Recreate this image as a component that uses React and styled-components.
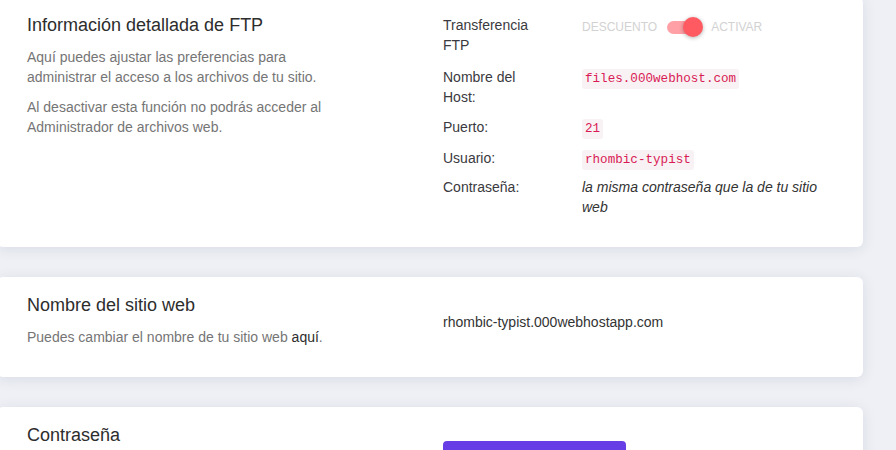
import React from "react";
import styled, { createGlobalStyle } from "styled-components";

const Global = createGlobalStyle`
  html, body { margin: 0; padding: 0; }
  body {
    background: #eef0f5;
    font-family: "Liberation Sans", Arial, sans-serif;
    color: #333;
    overflow: hidden;
  }
`;

const Page = styled.div`
  width: 896px;
  height: 450px;
  overflow: hidden;
`;

const Stack = styled.div`
  display: flex;
  flex-direction: column;
  gap: 30px;
  margin: -3px 0 0 -3px;
  width: 866px;
`;

const Card = styled.section`
  background: #fff;
  border-radius: 6px;
  box-shadow: 0 2px 14px rgba(40, 50, 90, 0.1);
  padding: 17px 30px 30px 30px;
  display: grid;
  grid-template-columns: 416px 1fr;
  min-height: ${(p) => p.$minHeight || 0}px;
`;

const Left = styled.div`
  display: flex;
  flex-direction: column;
`;

const Title = styled.h2`
  margin: 0 0 11px;
  font-size: 18px;
  line-height: 22px;
  font-weight: 400;
  color: #2d2d2d;
`;

const Desc = styled.p`
  margin: 0 0 10px;
  font-size: 14px;
  line-height: 20px;
  color: #757575;
  width: 320px;
  &:last-child { margin-bottom: 0; }
`;

const Link = styled.a`
  color: #2d2d2d;
  text-decoration: none;
`;

const Right = styled.div`
  padding-top: ${(p) => p.$offset || 1}px;
`;

const InfoList = styled.div`
  display: flex;
  flex-direction: column;
`;

const InfoRow = styled.div`
  display: grid;
  grid-template-columns: 139px 251px;
  font-size: 14px;
  line-height: 20px;
  margin-bottom: ${(p) => p.$gap ?? 10}px;
`;

const Label = styled.div`
  color: #3a3a40;
  width: 100px;
`;

const Value = styled.div`
  color: #333;
  font-style: ${(p) => (p.$italic ? "italic" : "normal")};
`;

const Code = styled.code`
  font-family: "Liberation Mono", "Courier New", monospace;
  font-size: 12.6px;
  line-height: 1;
  color: #d81b55;
  background: #f9f2f4;
  border-radius: 3px;
  padding: 3px 3px;
`;

const ToggleWrap = styled.div`
  display: flex;
  align-items: center;
  gap: 10px;
  height: 24px;
`;

const ToggleText = styled.span`
  font-size: 12px;
  color: #d2d2d2;
  text-transform: uppercase;
  line-height: 20px;
`;

const Track = styled.span`
  position: relative;
  display: inline-block;
  width: 29px;
  height: 13px;
  border-radius: 7px;
  background: #ffa0a6;
  margin-right: 5px;
`;

const Knob = styled.span`
  position: absolute;
  top: -4px;
  right: -7px;
  width: 20px;
  height: 20px;
  border-radius: 50%;
  background: #ff5a62;
  box-shadow: 0 1px 4px rgba(0, 0, 0, 0.3);
`;

const PlainValue = styled.div`
  font-size: 14px;
  line-height: 20px;
  color: #333;
`;

const Button = styled.button`
  width: 183px;
  height: 40px;
  border: 0;
  border-radius: 4px;
  background: #673de6;
  color: #fff;
  font-family: inherit;
  font-size: 14px;
`;

export default function App() {
  return (
    <Page>
      <Global />
      <Stack>
        <Card>
          <Left>
            <Title>Información detallada de FTP</Title>
            <Desc>
              Aquí puedes ajustar las preferencias para administrar el acceso a
              los archivos de tu sitio.
            </Desc>
            <Desc>
              Al desactivar esta función no podrás acceder al Administrador de
              archivos web.
            </Desc>
          </Left>
          <Right>
            <InfoList>
              <InfoRow $gap={12}>
                <Label>Transferencia FTP</Label>
                <Value>
                  <ToggleWrap>
                    <ToggleText>Descuento</ToggleText>
                    <Track>
                      <Knob />
                    </Track>
                    <ToggleText>Activar</ToggleText>
                  </ToggleWrap>
                </Value>
              </InfoRow>
              <InfoRow>
                <Label>Nombre del Host:</Label>
                <Value>
                  <Code>files.000webhost.com</Code>
                </Value>
              </InfoRow>
              <InfoRow $gap={11}>
                <Label>Puerto:</Label>
                <Value>
                  <Code>21</Code>
                </Value>
              </InfoRow>
              <InfoRow $gap={9}>
                <Label>Usuario:</Label>
                <Value>
                  <Code>rhombic-typist</Code>
                </Value>
              </InfoRow>
              <InfoRow $gap={0}>
                <Label>Contraseña:</Label>
                <Value $italic>la misma contraseña que la de tu sitio web</Value>
              </InfoRow>
            </InfoList>
          </Right>
        </Card>

        <Card>
          <Left>
            <Title>Nombre del sitio web</Title>
            <Desc>
              Puedes cambiar el nombre de tu sitio web <Link href="#">aquí</Link>.
            </Desc>
          </Left>
          <Right $offset={18}>
            <PlainValue>rhombic-typist.000webhostapp.com</PlainValue>
          </Right>
        </Card>

        <Card $minHeight={100}>
          <Left>
            <Title>Contraseña</Title>
          </Left>
          <Right $offset={17}>
            <Button aria-label="Cambiar contraseña" />
          </Right>
        </Card>
      </Stack>
    </Page>
  );
}
